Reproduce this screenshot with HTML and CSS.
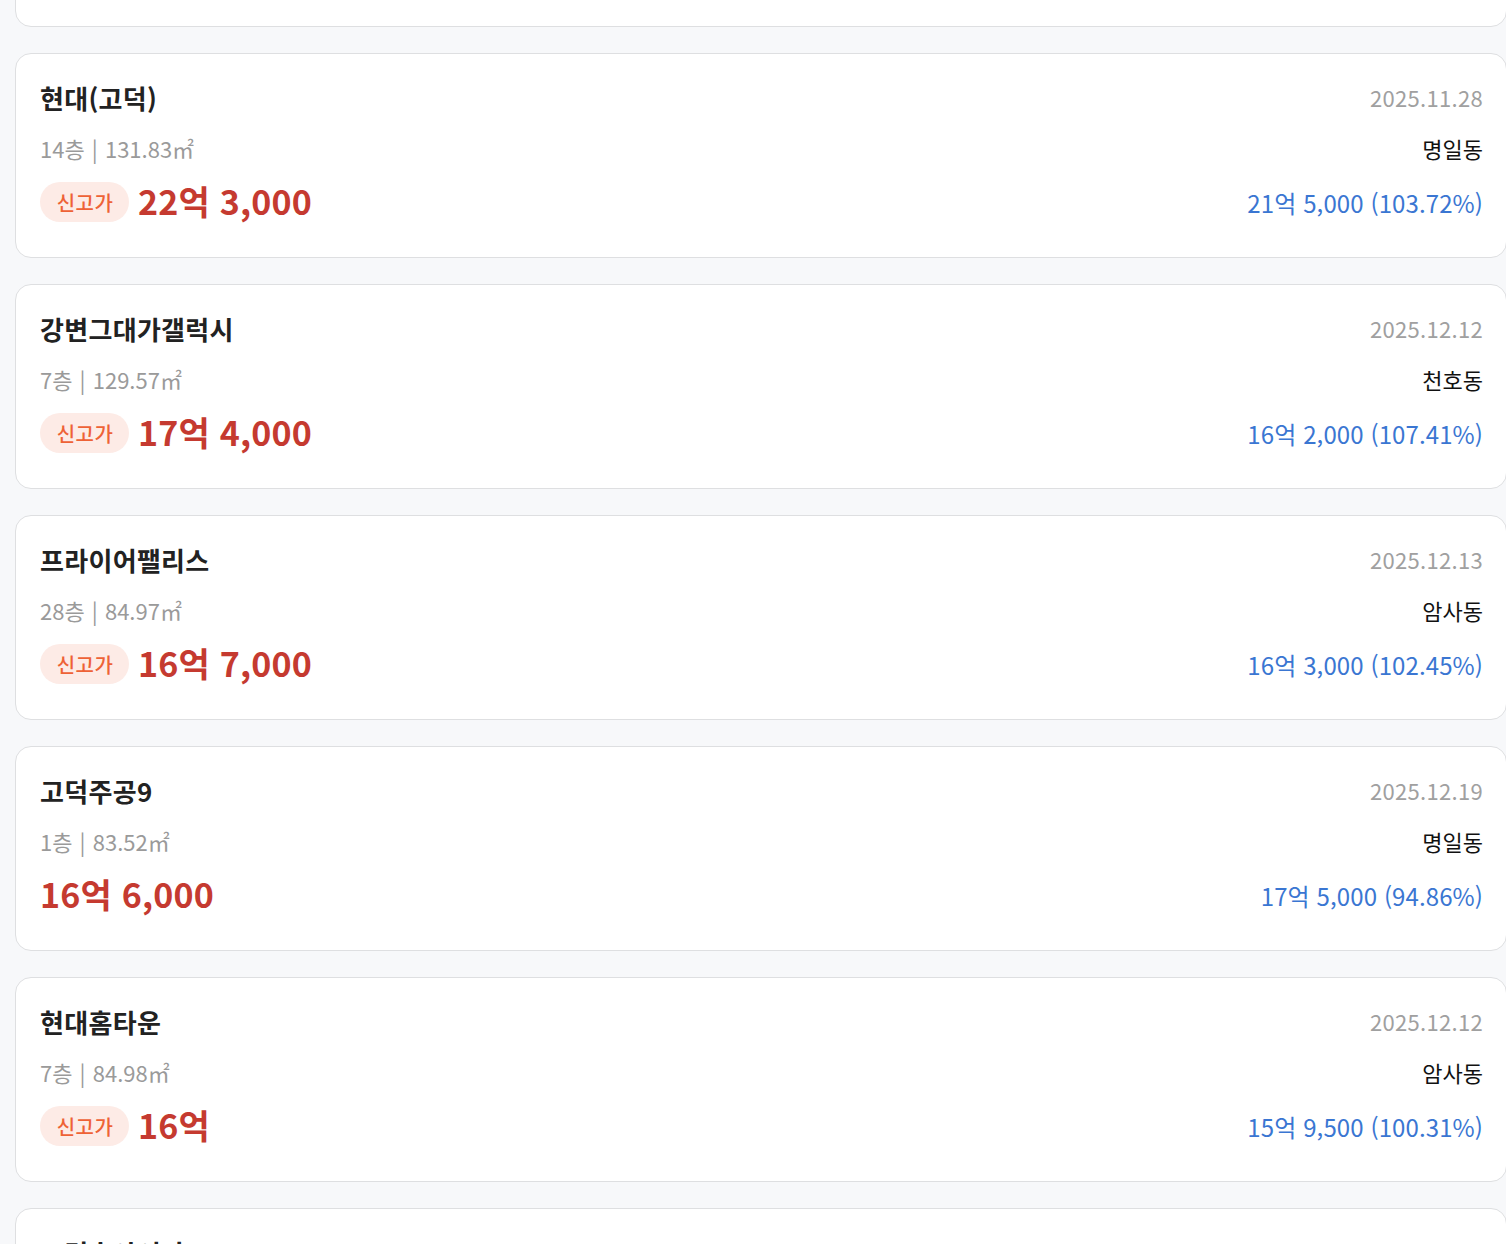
FILE: index.html
```html
<!DOCTYPE html>
<html lang="ko">
<head>
<meta charset="utf-8">
<title>실거래 목록</title>
<link rel="stylesheet" href="styles.css">
</head>
<body>
<div class="list">
  <div class="card card-prev">
    <div class="row r1"><span class="title">고덕그라시움</span><span class="date">2025.11.20</span></div>
    <div class="row r2"><span class="sub">10층 | 84.97㎡</span><span class="dong">고덕동</span></div>
    <div class="row r3"><div class="price-wrap"><span class="price">20억</span></div><span class="ref">19억 8,000 (101.01%)</span></div>
  </div>

  <div class="card">
    <div class="row r1"><span class="title">현대(고덕)</span><span class="date">2025.11.28</span></div>
    <div class="row r2"><span class="sub">14층 | 131.83㎡</span><span class="dong">명일동</span></div>
    <div class="row r3"><div class="price-wrap"><span class="badge">신고가</span><span class="price">22억 3,000</span></div><span class="ref">21억 5,000 (103.72%)</span></div>
  </div>

  <div class="card">
    <div class="row r1"><span class="title">강변그대가갤럭시</span><span class="date">2025.12.12</span></div>
    <div class="row r2"><span class="sub">7층 | 129.57㎡</span><span class="dong">천호동</span></div>
    <div class="row r3"><div class="price-wrap"><span class="badge">신고가</span><span class="price">17억 4,000</span></div><span class="ref">16억 2,000 (107.41%)</span></div>
  </div>

  <div class="card">
    <div class="row r1"><span class="title">프라이어팰리스</span><span class="date">2025.12.13</span></div>
    <div class="row r2"><span class="sub">28층 | 84.97㎡</span><span class="dong">암사동</span></div>
    <div class="row r3"><div class="price-wrap"><span class="badge">신고가</span><span class="price">16억 7,000</span></div><span class="ref">16억 3,000 (102.45%)</span></div>
  </div>

  <div class="card">
    <div class="row r1"><span class="title">고덕주공9</span><span class="date">2025.12.19</span></div>
    <div class="row r2"><span class="sub">1층 | 83.52㎡</span><span class="dong">명일동</span></div>
    <div class="row r3"><div class="price-wrap"><span class="price">16억 6,000</span></div><span class="ref">17억 5,000 (94.86%)</span></div>
  </div>

  <div class="card">
    <div class="row r1"><span class="title">현대홈타운</span><span class="date">2025.12.12</span></div>
    <div class="row r2"><span class="sub">7층 | 84.98㎡</span><span class="dong">암사동</span></div>
    <div class="row r3"><div class="price-wrap"><span class="badge">신고가</span><span class="price">16억</span></div><span class="ref">15억 9,500 (100.31%)</span></div>
  </div>

  <div class="card">
    <div class="row r1"><span class="title">고덕숲아이파크</span><span class="date">2025.12.20</span></div>
    <div class="row r2"><span class="sub">12층 | 84.95㎡</span><span class="dong">고덕동</span></div>
    <div class="row r3"><div class="price-wrap"><span class="price">18억</span></div><span class="ref">17억 8,000 (101.12%)</span></div>
  </div>
</div>
</body>
</html>
```

FILE: styles.css
```css
html, body {
  margin: 0;
  padding: 0;
  background: #f7f8fa;
  overflow: hidden;
}
body {
  font-family: "Noto Sans CJK KR", "Noto Sans", sans-serif;
  color: #222;
}
.list {
  display: flex;
  flex-direction: column;
  gap: 26px;
  padding-left: 15px;
  margin-top: -178px;
  width: 1492px;
}
.card {
  background: #fff;
  border: 1px solid #dedfe1;
  border-radius: 16px;
  padding: 25px 23px 33px 24px;
  height: 205px;
  box-sizing: border-box;
  display: flex;
  flex-direction: column;
}
.row {
  display: flex;
  justify-content: space-between;
  align-items: center;
}
.r1 { height: 36px; }
.r2 { height: 30px; margin-top: 18px; }
.r3 { height: 40px; margin-top: 19px; }
.title {
  font-size: 26px;
  font-weight: 700;
  color: #222;
  letter-spacing: 0.3px;
}
.date {
  font-size: 22px;
  color: #a0a0a0;
  letter-spacing: 0.3px;
}
.sub {
  font-size: 22px;
  color: #9a9a9a;
  word-spacing: 1px;
}
.dong {
  font-size: 22px;
  color: #111;
}
.price-wrap {
  display: flex;
  align-items: center;
  gap: 9px;
}
.badge {
  display: inline-flex;
  align-items: center;
  justify-content: center;
  width: 89px;
  height: 40px;
  border-radius: 20px;
  background: #fdebe6;
  color: #ee6236;
  font-size: 20px;
  font-weight: 500;
  letter-spacing: 0.5px;
  padding-left: 1px;
  box-sizing: border-box;
}
.price {
  font-size: 34px;
  font-weight: 700;
  color: #c53a30;
  letter-spacing: 0.2px;
  position: relative;
  top: -2px;
}
.ref {
  font-size: 24px;
  color: #3a76d2;
  letter-spacing: 0.1px;
}
```
